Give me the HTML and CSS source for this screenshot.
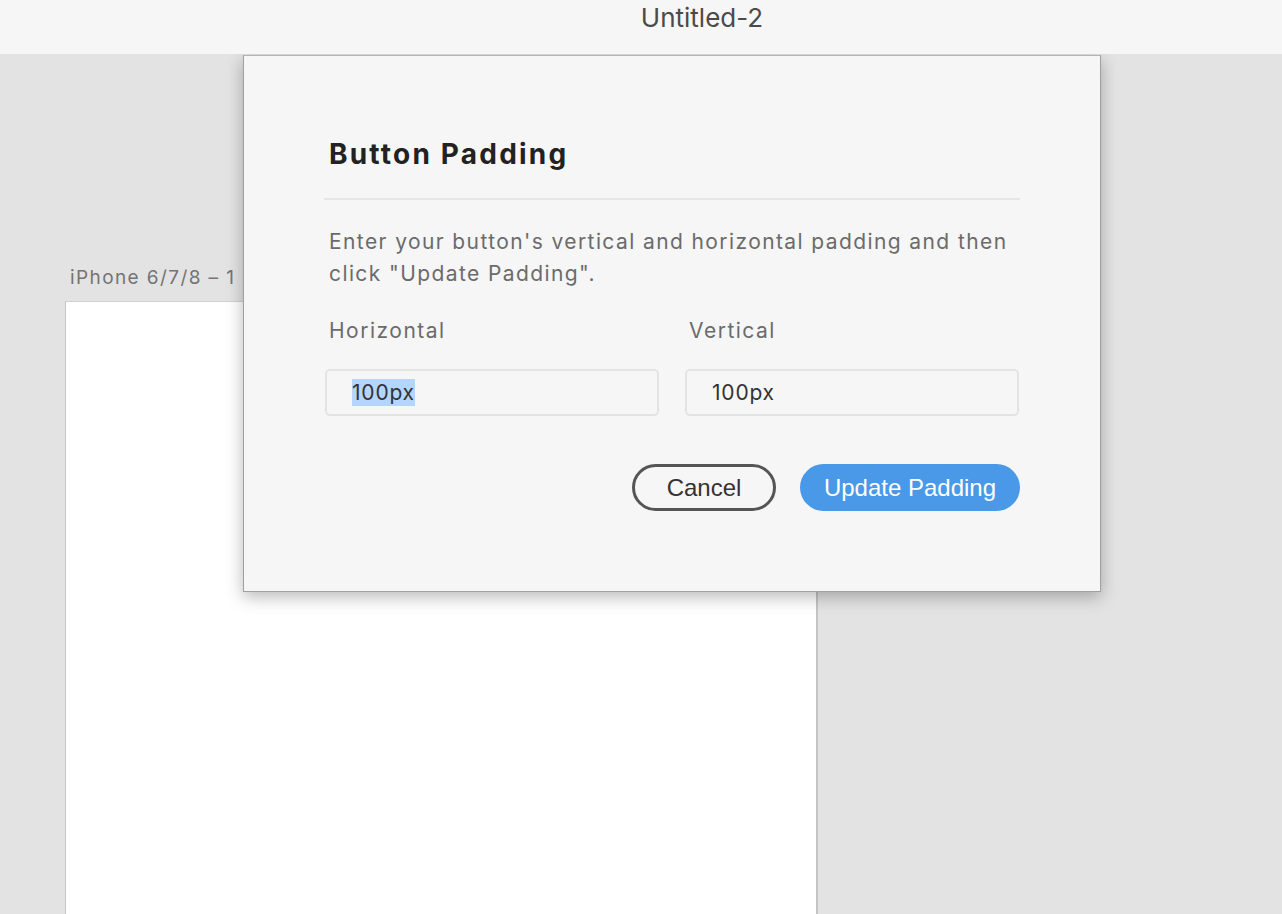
FILE: index.html
```html
<!DOCTYPE html>
<html>
<head>
<meta charset="utf-8">
<link rel="stylesheet" href="styles.css">
</head>
<body>
<div class="app">
  <header class="titlebar">Untitled-2</header>
  <main class="canvas">
    <div class="artboard-label">iPhone 6/7/8 – 1</div>
    <div class="artboard"></div>
    <section class="dialog">
      <h1 class="dialog-title">Button Padding</h1>
      <hr class="divider">
      <p class="desc">Enter your button's vertical and horizontal padding and then click "Update Padding".</p>
      <div class="fields">
        <div class="field">
          <label class="field-label">Horizontal</label>
          <div class="input"><span class="val sel">100px</span></div>
        </div>
        <div class="field">
          <label class="field-label">Vertical</label>
          <div class="input"><span class="val">100px</span></div>
        </div>
      </div>
      <div class="actions">
        <button class="btn btn-cancel">Cancel</button>
        <button class="btn btn-primary">Update Padding</button>
      </div>
    </section>
  </main>
</div>
</body>
</html>
```
FILE: styles.css
```css
* { box-sizing: border-box; }
html, body { margin: 0; padding: 0; }
body {
  width: 1282px;
  height: 914px;
  overflow: hidden;
  font-family: Inter, "Liberation Sans", sans-serif;
  background: #e3e3e3;
}
.app { display: flex; flex-direction: column; height: 914px; overflow: hidden; }
.titlebar {
  height: 54px;
  background: #f6f6f6;
  color: #4a4a4a;
  font-size: 26px;
  line-height: 31px;
  text-align: center;
  padding-top: 2px;
  padding-left: 122px;
  flex: none;
}
.canvas { position: relative; flex: 1; background: #e3e3e3; overflow: hidden; }
.artboard-label {
  position: absolute;
  left: 70px;
  top: 212px;
  font-size: 19px;
  line-height: 23px;
  letter-spacing: 1.4px;
  color: #747474;
}
.artboard {
  position: absolute;
  left: 65px;
  top: 247px;
  width: 753px;
  height: 700px;
  background: #fff;
  border-left: 1px solid #c6c6c6;
  border-right: 2px solid #c4c4c4;
  border-top: 1px solid #d0d0d0;
}
.dialog {
  position: absolute;
  left: 243px;
  top: 1px;
  width: 858px;
  height: 537px;
  background: #f6f6f6;
  border: 1px solid #a0a0a0;
  border-top-color: #b4b4b4;
  box-shadow: 0 5px 16px rgba(0,0,0,0.28);
  padding: 78px 80px 0 80px;
}
.dialog-title {
  margin: 0 0 0 5px;
  font-size: 28px;
  font-weight: 700;
  letter-spacing: 2.2px;
  color: #222;
  line-height: 40px;
}
.divider {
  margin: 24px 0 0 0;
  border: 0;
  height: 2px;
  background: #e6e6e6;
}
.desc {
  margin: 26px 0 0 5px;
  font-size: 21px;
  line-height: 32px;
  letter-spacing: 1.4px;
  color: #6b6b6b;
}
.fields { display: flex; gap: 26px; margin: 25px 1px 0 1px; }
.field { flex: 1; display: flex; flex-direction: column; }
.field-label {
  font-size: 21px;
  line-height: 32px;
  letter-spacing: 1.5px;
  color: #6b6b6b;
  margin-left: 4px;
}
.input {
  margin-top: 22px;
  height: 47px;
  border: 2px solid #e3e3e3;
  border-radius: 5px;
  padding: 0 0 0 25px;
  display: flex;
  align-items: center;
  font-size: 21px;
  color: #333;
}
.val { line-height: 27px; letter-spacing: 0.8px; }
.sel { background: #b4d5fe; }
.actions {
  display: flex;
  justify-content: flex-end;
  gap: 24px;
  margin-top: 48px;
}
.btn {
  height: 47px;
  border-radius: 24px;
  font-family: "Liberation Sans", sans-serif;
  font-size: 24px;
  padding: 0;
  cursor: pointer;
}
.btn-cancel {
  width: 144px;
  background: transparent;
  border: 3px solid #555;
  color: #333;
}
.btn-primary {
  width: 220px;
  background: #4a98e8;
  border: 0;
  color: #fff;
}
```
